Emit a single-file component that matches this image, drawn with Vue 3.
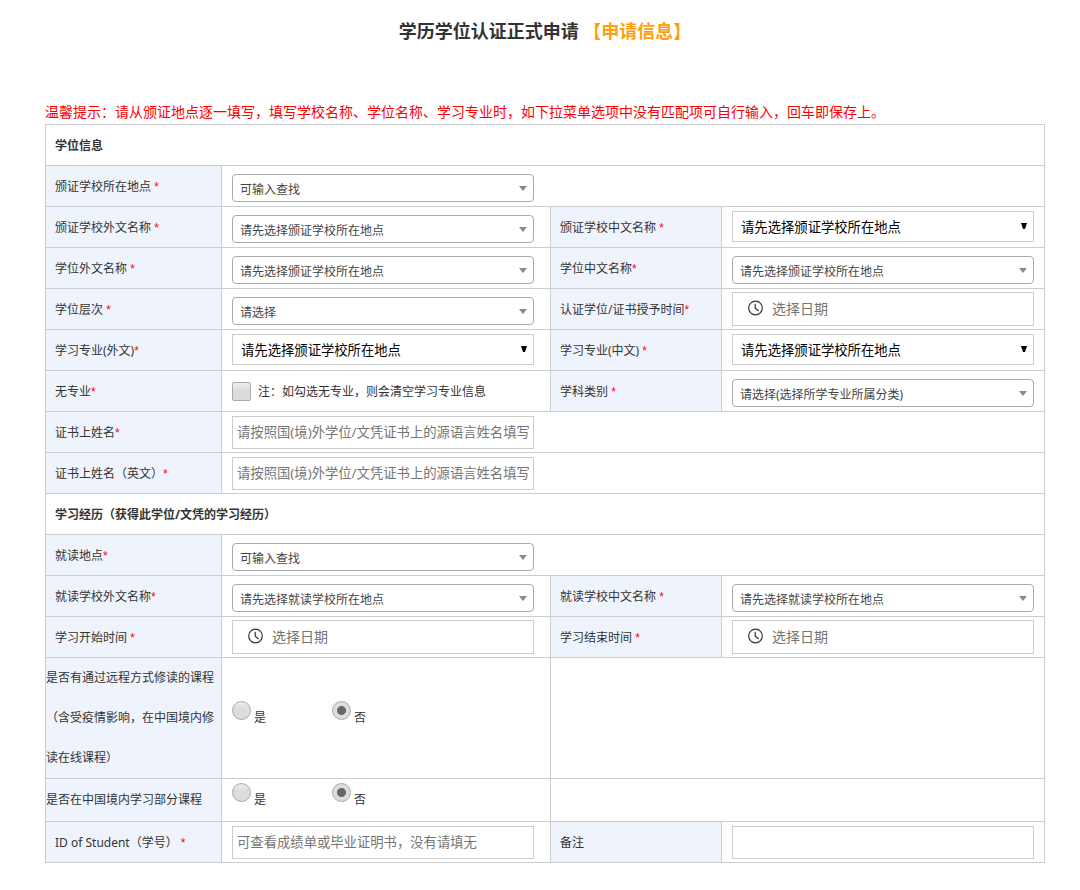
<script setup>
import { reactive } from 'vue'

const pickSchool = '请先选择颁证学校所在地点'
const pickStudy = '请先选择就读学校所在地点'
const namePlaceholder = '请按照国(境)外学位/文凭证书上的源语言姓名填写'

const rows = [
  { title: '学位信息' },
  { cells: [{ id: 'awardPlace', label: '颁证学校所在地点 ', req: true, type: 'search', text: '可输入查找' }] },
  {
    cells: [
      { id: 'awardSchool', label: '颁证学校外文名称 ', req: true, type: 'search', text: pickSchool },
      { id: 'awardSchoolCn', label: '颁证学校中文名称 ', req: true, type: 'select', text: pickSchool },
    ],
  },
  {
    cells: [
      { id: 'degree', label: '学位外文名称 ', req: true, type: 'search', text: pickSchool },
      { id: 'degreeCn', label: '学位中文名称', req: true, type: 'search', text: pickSchool },
    ],
  },
  {
    cells: [
      { id: 'level', label: '学位层次 ', req: true, type: 'search', text: '请选择' },
      { id: 'awardDate', label: '认证学位/证书授予时间', req: true, type: 'date' },
    ],
  },
  {
    cells: [
      { id: 'major', label: '学习专业(外文)', req: true, type: 'select', text: pickSchool },
      { id: 'majorCn', label: '学习专业(中文) ', req: true, type: 'select', text: pickSchool },
    ],
  },
  {
    cells: [
      { id: 'noMajor', label: '无专业', req: true, type: 'check', text: '注：如勾选无专业，则会清空学习专业信息' },
      { id: 'subject', label: '学科类别 ', req: true, type: 'search', text: '请选择(选择所学专业所属分类)' },
    ],
  },
  { cells: [{ id: 'certName', label: '证书上姓名', req: true, type: 'text', text: namePlaceholder }] },
  { cells: [{ id: 'certNameEn', label: '证书上姓名（英文）', req: true, type: 'text', text: namePlaceholder }] },
  { title: '学习经历（获得此学位/文凭的学习经历）' },
  { cells: [{ id: 'studyPlace', label: '就读地点', req: true, type: 'search', text: '可输入查找' }] },
  {
    cells: [
      { id: 'studySchool', label: '就读学校外文名称', req: true, type: 'search', text: pickStudy },
      { id: 'studySchoolCn', label: '就读学校中文名称 ', req: true, type: 'search', text: pickStudy },
    ],
  },
  {
    cells: [
      { id: 'startDate', label: '学习开始时间 ', req: true, type: 'date' },
      { id: 'endDate', label: '学习结束时间 ', req: true, type: 'date' },
    ],
  },
  { split: true, cells: [{ id: 'remote', label: '是否有通过远程方式修读的课程（含受疫情影响，在中国境内修读在线课程）', type: 'radio' }] },
  { split: true, cells: [{ id: 'inChina', label: '是否在中国境内学习部分课程', type: 'radio' }] },
  {
    cells: [
      { id: 'studentId', label: 'ID of Student（学号） ', req: true, type: 'text', text: '可查看成绩单或毕业证明书，没有请填无' },
      { id: 'remark', label: '备注', type: 'text', text: '' },
    ],
  },
]

const answers = reactive({ remote: 'no', inChina: 'no' })
</script>

<template>
  <main class="page">
    <h1>学历学位认证正式申请 <span class="step">【申请信息】</span></h1>
    <p class="notice">温馨提示：请从颁证地点逐一填写，填写学校名称、学位名称、学习专业时，如下拉菜单选项中没有匹配项可自行输入，回车即保存上。</p>
    <form @submit.prevent>
      <table>
        <colgroup>
          <col class="c1" /><col class="c2" /><col class="c3" /><col />
        </colgroup>
        <tbody>
          <tr v-for="(row, i) in rows" :key="i">
            <th v-if="row.title" colspan="4" class="section">{{ row.title }}</th>
            <template v-else>
              <template v-for="cell in row.cells" :key="cell.id">
                <th scope="row" :class="['name', { flush: row.split }]">
                  <span v-if="cell.type === 'radio'" :id="cell.id">{{ cell.label }}</span>
                  <label v-else :for="cell.id">{{ cell.label }}<span v-if="cell.req" class="req">*</span></label>
                </th>
                <td :colspan="row.cells.length === 1 && !row.split ? 3 : 1">
                  <div v-if="cell.type === 'search'" class="field search">
                    <select :id="cell.id"><option>{{ cell.text }}</option></select>
                    <svg class="arrow" width="8" height="5" viewBox="0 0 8 5" aria-hidden="true"><path d="M0 0h8L4 5z" fill="#888" /></svg>
                  </div>
                  <div v-else-if="cell.type === 'select'" class="field plain">
                    <select :id="cell.id"><option>{{ cell.text }}</option></select>
                    <svg class="arrow" width="6" height="6" viewBox="0 0 6 6" aria-hidden="true"><path d="M0 0h6L4 6H2z" fill="#000" /></svg>
                  </div>
                  <div v-else-if="cell.type === 'date'" class="field date">
                    <svg width="16" height="16" viewBox="0 0 16 16" fill="none" stroke="#333" aria-hidden="true">
                      <circle cx="7.5" cy="8" r="6.8" stroke-width="1.2" />
                      <path d="M7.2 3.7V8.2L10.6 11" stroke-width="1.2" />
                    </svg>
                    <input :id="cell.id" type="text" placeholder="选择日期" />
                  </div>
                  <input v-else-if="cell.type === 'text'" :id="cell.id" class="field text" type="text" :placeholder="cell.text" />
                  <div v-else-if="cell.type === 'check'" class="check">
                    <input :id="cell.id" type="checkbox" />
                    <label :for="cell.id">{{ cell.text }}</label>
                  </div>
                  <div v-else class="radios" role="radiogroup" :aria-labelledby="cell.id">
                    <label><input v-model="answers[cell.id]" type="radio" :name="cell.id" value="yes" />是</label>
                    <label><input v-model="answers[cell.id]" type="radio" :name="cell.id" value="no" />否</label>
                  </div>
                </td>
              </template>
              <td v-if="row.split" colspan="2"></td>
            </template>
          </tr>
        </tbody>
      </table>
    </form>
  </main>
</template>

<style>
body {
  background: #fff;
}
</style>

<style scoped>
.page {
  padding: 0 35px 24px 45px;
  color: #333;
  font-family: "Noto Sans", "Noto Sans CJK SC", sans-serif;
  font-size: 12px;
}
h1 {
  margin: 0 0 38px;
  font-size: 18px;
  line-height: 62px;
  text-align: center;
}
.step {
  color: #ff9f0f;
}
.notice {
  margin: 0;
  color: #f00;
  font-size: 14px;
  line-height: 24px;
}
table {
  width: 100%;
  border-collapse: collapse;
  table-layout: fixed;
}
.c1 { width: 176px; }
.c2 { width: 329px; }
.c3 { width: 171px; }
th,
td {
  box-sizing: border-box;
  height: 41px;
  padding: 0 10px;
  border: 1px solid #ccc;
  text-align: left;
  vertical-align: middle;
}
th {
  padding: 2px 9px 0;
  line-height: 38px;
}
.name {
  background: #eff4fc;
  font-weight: 400;
}
.flush {
  height: 43px;
  padding: 0;
  line-height: 40px;
}
.req {
  color: #f00;
  font-family: "Liberation Sans", sans-serif;
}
.field {
  position: relative;
  box-sizing: border-box;
  display: block;
  width: 302px;
  max-width: 100%;
}
select,
input {
  font-family: inherit;
  box-sizing: border-box;
  margin: 0;
}
select {
  display: block;
  width: 100%;
  appearance: none;
  background: #fff;
  outline: 0;
}
.arrow {
  position: absolute;
  pointer-events: none;
}
.search {
  padding-top: 4px;
}
.search select {
  height: 28px;
  padding: 3px 24px 0 7px;
  border: 1px solid #aaa;
  border-radius: 4px;
  color: #444;
  font-size: 12px;
}
.search .arrow {
  top: 16px;
  right: 7px;
}
.plain {
  padding-bottom: 2px;
}
.plain select {
  height: 31px;
  padding: 1px 24px 0 8px;
  border: 1px solid #ccc;
  border-radius: 0;
  color: #000;
}
.plain .arrow {
  top: 12px;
  right: 7px;
}
.text {
  height: 33px;
  padding: 0 4px;
  border: 1px solid #ccc;
}
.date {
  display: flex;
  align-items: center;
  gap: 8px;
  height: 34px;
  padding: 0 15px 2px;
  border: 1px solid #ccc;
}
.date input {
  flex: 1;
  min-width: 0;
  padding: 0;
  border: 0;
  font-size: 14px;
}
::placeholder {
  color: #757575;
}
.check {
  display: flex;
  align-items: center;
  gap: 7px;
}
.check input,
.radios input {
  appearance: none;
  flex: none;
  width: 19px;
  height: 19px;
  border: 1px solid #aaa;
  border-radius: 2px;
  background: linear-gradient(#eee, #ddd 40%, #dcdcdc);
}
.radios {
  display: flex;
  padding-bottom: 2px;
}
.radios label {
  display: flex;
  gap: 3px;
  width: 100px;
  line-height: 33px;
}
.radios input {
  border-radius: 50%;
}
.radios input:checked {
  background: radial-gradient(circle, #666 0 4px, #ddd 5px);
}
.check input:checked {
  background: #666;
}
</style>
